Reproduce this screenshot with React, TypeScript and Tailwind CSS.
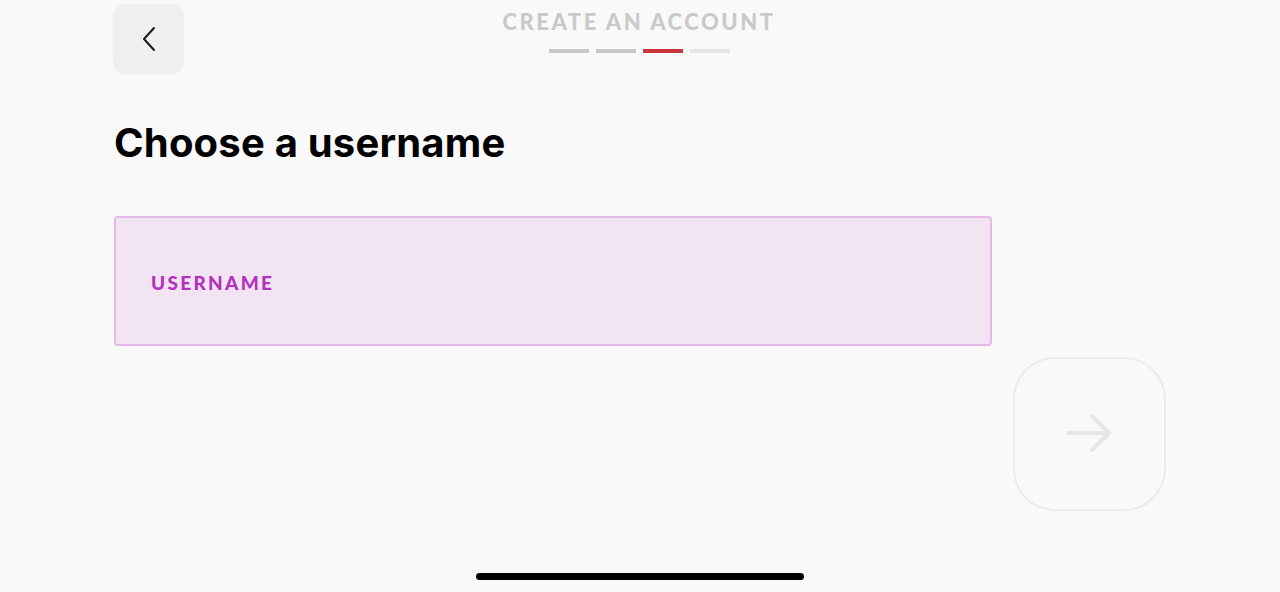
import React from "react";

const steps = ["bg-[#c8c8c8]", "bg-[#c8c8c8]", "bg-[#c9363b]", "bg-[#e4e4e4]"];

export default function App() {
  return (
    <div className="relative h-[592px] w-[1280px] overflow-hidden bg-[#f9f9f9] font-['Lato',sans-serif]">
      <div className="flex h-[74px] items-start pl-[113px] pt-[4px]">
        <button className="flex h-[70px] w-[71px] items-center justify-center rounded-[12px] bg-[#efefef]">
          <svg width="20" height="26" viewBox="0 0 20 26" fill="none">
            <path d="M15 2 L5 13 L15 24" stroke="#1a1a1a" strokeWidth="2" strokeLinecap="round" strokeLinejoin="round" />
          </svg>
        </button>
        <div className="ml-[319px] flex w-[272px] flex-col items-center pt-[5px]">
          <div className="text-[22px] leading-[26px] font-black tracking-[2.5px] whitespace-nowrap text-[#c9c9c9]">
            CREATE AN ACCOUNT
          </div>
          <div className="mt-[14px] flex gap-[7px]">
            {steps.map((c, i) => (
              <div key={i} className={`h-[4px] w-[40px] ${c}`} />
            ))}
          </div>
        </div>
      </div>

      <div className="pl-[114px] pr-[290px]">
        <h1 className="mt-[45px] font-['Inter',sans-serif] text-[40px] leading-[48px] font-bold tracking-[0.2px] text-black">
          Choose a username
        </h1>
        <div className="mt-[49px] flex h-[130px] w-[878px] items-center rounded-[4px] border-2 border-[#e5b8ea] bg-[#f3e4f4] pl-[35px] pt-[4px]">
          <span className="text-[19px] font-black tracking-[2.3px] text-[#b330c0]">USERNAME</span>
        </div>
      </div>

      <div className="flex justify-end pr-[114px] pt-[11px]">
        <button className="flex h-[154px] w-[153px] items-center justify-center rounded-[42px] border-2 border-[#ebebeb]">
          <svg width="48" height="48" viewBox="0 0 48 48" fill="none">
            <path d="M2 23 H43 M26 6 L43 23 L26 40" stroke="#e6e6e6" strokeWidth="4" strokeLinecap="round" strokeLinejoin="round" />
          </svg>
        </button>
      </div>

      <div className="absolute bottom-[12px] left-[476px] h-[7px] w-[328px] rounded-full bg-black" />
    </div>
  );
}
